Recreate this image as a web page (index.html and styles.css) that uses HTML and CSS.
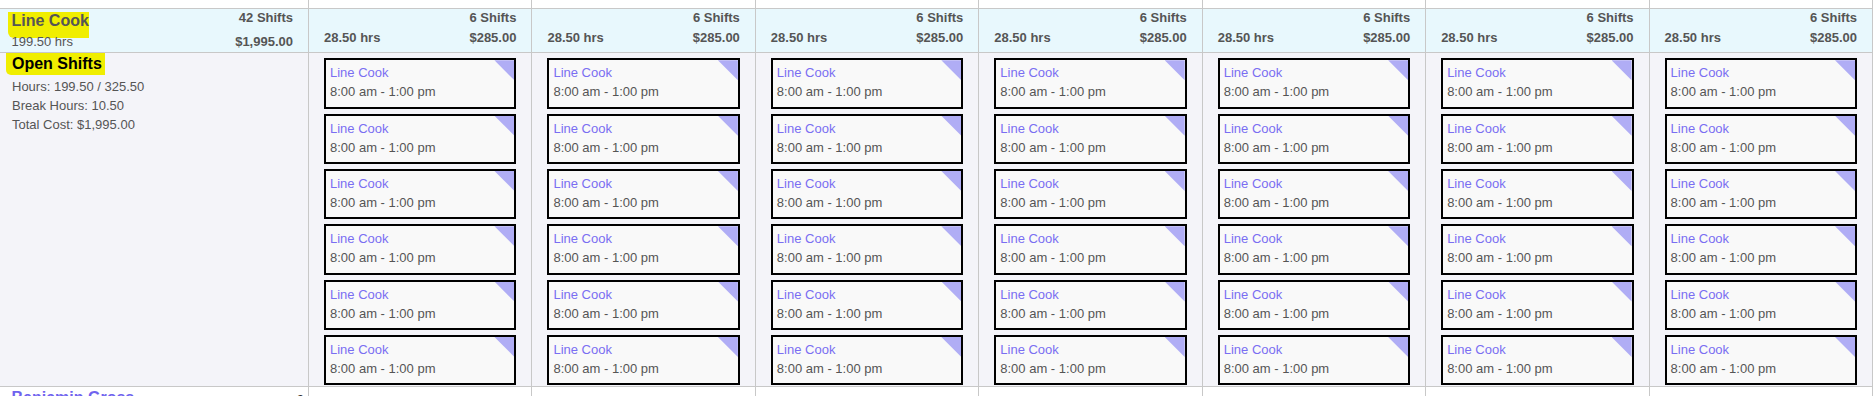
FILE: index.html
```html
<!DOCTYPE html>
<html lang="en">
<head>
<meta charset="utf-8">
<title>Schedule</title>
<link rel="stylesheet" href="styles.css">
</head>
<body>
<div class="schedule">
  <div class="row row-top">
    <div class="cell"></div><div class="cell"></div><div class="cell"></div><div class="cell"></div>
    <div class="cell"></div><div class="cell"></div><div class="cell"></div><div class="cell"></div>
  </div>

  <div class="row row-head">
    <div class="cell head head-role">
      <div class="role-line1">
        <span class="role-name">Line Cook</span>
        <span class="strong">42 Shifts</span>
      </div>
      <div class="role-line2"><span>199.50 hrs</span><span class="strong">$1,995.00</span></div>
    </div>
    <div class="cell head head-day"><div class="day-line1">6 Shifts</div><div class="day-line2"><span>28.50 hrs</span><span>$285.00</span></div></div>
    <div class="cell head head-day"><div class="day-line1">6 Shifts</div><div class="day-line2"><span>28.50 hrs</span><span>$285.00</span></div></div>
    <div class="cell head head-day"><div class="day-line1">6 Shifts</div><div class="day-line2"><span>28.50 hrs</span><span>$285.00</span></div></div>
    <div class="cell head head-day"><div class="day-line1">6 Shifts</div><div class="day-line2"><span>28.50 hrs</span><span>$285.00</span></div></div>
    <div class="cell head head-day"><div class="day-line1">6 Shifts</div><div class="day-line2"><span>28.50 hrs</span><span>$285.00</span></div></div>
    <div class="cell head head-day"><div class="day-line1">6 Shifts</div><div class="day-line2"><span>28.50 hrs</span><span>$285.00</span></div></div>
    <div class="cell head head-day"><div class="day-line1">6 Shifts</div><div class="day-line2"><span>28.50 hrs</span><span>$285.00</span></div></div>
  </div>

  <div class="row row-body">
    <div class="cell body info">
      <div class="info-title">Open Shifts</div>
      <div class="info-lines">
        <div>Hours: 199.50 / 325.50</div>
        <div>Break Hours: 10.50</div>
        <div>Total Cost: $1,995.00</div>
      </div>
    </div>
    <div class="cell body day">
      <div class="card"><div class="card-role">Line Cook</div><div>8:00 am - 1:00 pm</div></div>
      <div class="card"><div class="card-role">Line Cook</div><div>8:00 am - 1:00 pm</div></div>
      <div class="card"><div class="card-role">Line Cook</div><div>8:00 am - 1:00 pm</div></div>
      <div class="card"><div class="card-role">Line Cook</div><div>8:00 am - 1:00 pm</div></div>
      <div class="card"><div class="card-role">Line Cook</div><div>8:00 am - 1:00 pm</div></div>
      <div class="card"><div class="card-role">Line Cook</div><div>8:00 am - 1:00 pm</div></div>
    </div>
    <div class="cell body day">
      <div class="card"><div class="card-role">Line Cook</div><div>8:00 am - 1:00 pm</div></div>
      <div class="card"><div class="card-role">Line Cook</div><div>8:00 am - 1:00 pm</div></div>
      <div class="card"><div class="card-role">Line Cook</div><div>8:00 am - 1:00 pm</div></div>
      <div class="card"><div class="card-role">Line Cook</div><div>8:00 am - 1:00 pm</div></div>
      <div class="card"><div class="card-role">Line Cook</div><div>8:00 am - 1:00 pm</div></div>
      <div class="card"><div class="card-role">Line Cook</div><div>8:00 am - 1:00 pm</div></div>
    </div>
    <div class="cell body day">
      <div class="card"><div class="card-role">Line Cook</div><div>8:00 am - 1:00 pm</div></div>
      <div class="card"><div class="card-role">Line Cook</div><div>8:00 am - 1:00 pm</div></div>
      <div class="card"><div class="card-role">Line Cook</div><div>8:00 am - 1:00 pm</div></div>
      <div class="card"><div class="card-role">Line Cook</div><div>8:00 am - 1:00 pm</div></div>
      <div class="card"><div class="card-role">Line Cook</div><div>8:00 am - 1:00 pm</div></div>
      <div class="card"><div class="card-role">Line Cook</div><div>8:00 am - 1:00 pm</div></div>
    </div>
    <div class="cell body day">
      <div class="card"><div class="card-role">Line Cook</div><div>8:00 am - 1:00 pm</div></div>
      <div class="card"><div class="card-role">Line Cook</div><div>8:00 am - 1:00 pm</div></div>
      <div class="card"><div class="card-role">Line Cook</div><div>8:00 am - 1:00 pm</div></div>
      <div class="card"><div class="card-role">Line Cook</div><div>8:00 am - 1:00 pm</div></div>
      <div class="card"><div class="card-role">Line Cook</div><div>8:00 am - 1:00 pm</div></div>
      <div class="card"><div class="card-role">Line Cook</div><div>8:00 am - 1:00 pm</div></div>
    </div>
    <div class="cell body day">
      <div class="card"><div class="card-role">Line Cook</div><div>8:00 am - 1:00 pm</div></div>
      <div class="card"><div class="card-role">Line Cook</div><div>8:00 am - 1:00 pm</div></div>
      <div class="card"><div class="card-role">Line Cook</div><div>8:00 am - 1:00 pm</div></div>
      <div class="card"><div class="card-role">Line Cook</div><div>8:00 am - 1:00 pm</div></div>
      <div class="card"><div class="card-role">Line Cook</div><div>8:00 am - 1:00 pm</div></div>
      <div class="card"><div class="card-role">Line Cook</div><div>8:00 am - 1:00 pm</div></div>
    </div>
    <div class="cell body day">
      <div class="card"><div class="card-role">Line Cook</div><div>8:00 am - 1:00 pm</div></div>
      <div class="card"><div class="card-role">Line Cook</div><div>8:00 am - 1:00 pm</div></div>
      <div class="card"><div class="card-role">Line Cook</div><div>8:00 am - 1:00 pm</div></div>
      <div class="card"><div class="card-role">Line Cook</div><div>8:00 am - 1:00 pm</div></div>
      <div class="card"><div class="card-role">Line Cook</div><div>8:00 am - 1:00 pm</div></div>
      <div class="card"><div class="card-role">Line Cook</div><div>8:00 am - 1:00 pm</div></div>
    </div>
    <div class="cell body day">
      <div class="card"><div class="card-role">Line Cook</div><div>8:00 am - 1:00 pm</div></div>
      <div class="card"><div class="card-role">Line Cook</div><div>8:00 am - 1:00 pm</div></div>
      <div class="card"><div class="card-role">Line Cook</div><div>8:00 am - 1:00 pm</div></div>
      <div class="card"><div class="card-role">Line Cook</div><div>8:00 am - 1:00 pm</div></div>
      <div class="card"><div class="card-role">Line Cook</div><div>8:00 am - 1:00 pm</div></div>
      <div class="card"><div class="card-role">Line Cook</div><div>8:00 am - 1:00 pm</div></div>
    </div>
  </div>

  <div class="row row-next">
    <div class="cell next-role"><span class="emp-name">Benjamin Gross</span><span class="emp-count">0</span></div>
    <div class="cell"></div><div class="cell"></div><div class="cell"></div><div class="cell"></div>
    <div class="cell"></div><div class="cell"></div><div class="cell"></div>
  </div>
</div>
</body>
</html>
```

FILE: styles.css
```css
* { box-sizing: border-box; }

html, body {
  margin: 0;
  padding: 0;
  background: #ffffff;
}

body {
  width: 1873px;
  height: 396px;
  overflow: hidden;
  font-family: "Liberation Sans", Arial, sans-serif;
  font-size: 13px;
  color: #555555;
}

.schedule {
  display: flex;
  flex-direction: column;
}

.row {
  display: grid;
  grid-template-columns: 309px repeat(7, 1fr);
}

.cell {
  border-right: 1px solid #c8c8c8;
  border-bottom: 1px solid #c8c8c8;
  min-width: 0;
}

.row-top .cell {
  height: 9px;
  background: #ffffff;
}

/* header row */
.head {
  height: 44px;
  background: #e8f8fd;
}

.strong { font-weight: bold; }

.head-role {
  padding: 0 15px 0 11.5px;
}

.role-line1 {
  display: flex;
  justify-content: space-between;
  align-items: flex-start;
  height: 23.7px;
  line-height: 18.5px;
}

.role-name {
  display: inline-block;
  font-size: 16px;
  font-weight: bold;
  line-height: 18px;
  margin: 2.7px 0 0 -3.2px;
  padding: 0 0 8.6px 3.2px;
  background: #f0ee00;
  border-bottom-left-radius: 6px;
}

.role-line2 {
  display: flex;
  justify-content: space-between;
  line-height: 18.5px;
}

.head-day {
  padding: 0 15px;
  font-weight: bold;
  line-height: 18.5px;
}

.day-line1 {
  height: 19.5px;
  text-align: right;
}

.day-line2 {
  display: flex;
  justify-content: space-between;
}

/* body row */
.body {
  height: 334px;
  background: #f4f4f9;
}

.info {
  padding: 0 15px 0 12px;
}

.info-title {
  display: inline-block;
  font-size: 16px;
  font-weight: bold;
  color: #000000;
  line-height: 21.5px;
  margin-left: -6px;
  padding: 0 3.2px 0 6px;
  background: #f0ee00;
  border-bottom-left-radius: 5px;
}

.info-lines {
  margin-top: 2.35px;
  line-height: 19.3px;
}

.day {
  display: flex;
  flex-direction: column;
  gap: 4.84px;
  padding: 5.3px 15px 0;
}

.card {
  position: relative;
  height: 50.5px;
  flex: none;
  border: 2px solid #000000;
  background: #f9f9f9;
  padding: 3px 4px;
  line-height: 19px;
}

.card::after {
  content: "";
  position: absolute;
  top: 0;
  right: 0;
  width: 20px;
  height: 20px;
  background: #b0adf5;
  clip-path: polygon(0 0, 100% 0, 100% 100%);
}

.card-role {
  color: #7a6ef2;
}

/* next row (cut off) */
.row-next .cell {
  height: 40px;
  background: #ffffff;
}

.next-role {
  display: flex;
  justify-content: space-between;
  padding: 0 4px 0 11.5px;
}

.emp-name {
  font-size: 16px;
  font-weight: bold;
  color: #6f63ee;
  line-height: 21.5px;
}

.emp-count {
  font-size: 13px;
  font-weight: bold;
  color: #333333;
  line-height: 21px;
  padding-top: 2px;
}
```
